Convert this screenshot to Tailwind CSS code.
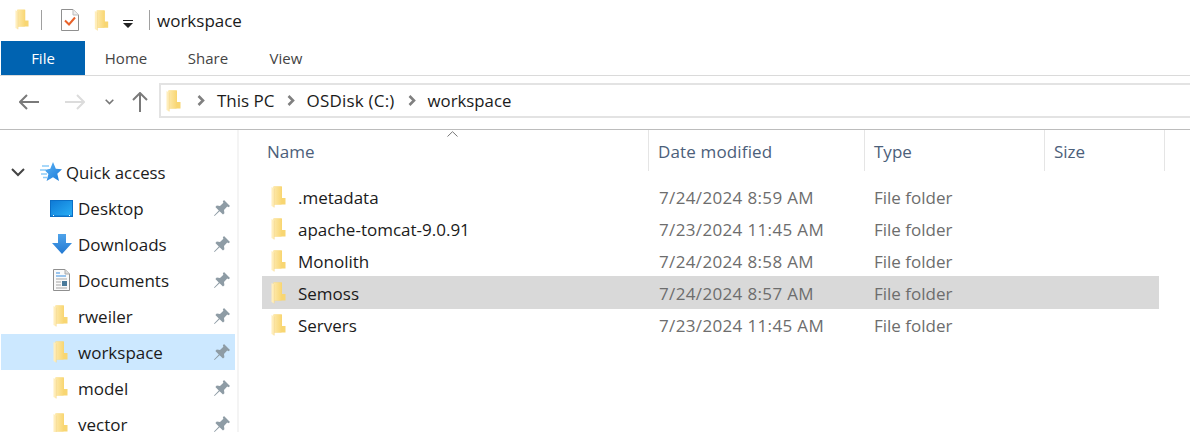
<!DOCTYPE html>
<html lang="en">
<head>
  <meta charset="UTF-8" />
  <title>workspace</title>
  <script src="https://cdn.jsdelivr.net/npm/@tailwindcss/browser@4"></script>
</head>
<body class="w-[1190px] h-[432px] overflow-hidden bg-white font-['Open_Sans',sans-serif] text-[17px] text-[#1b1b1b]">
  <svg class="absolute w-0 h-0">
    <defs>
      <linearGradient id="fold" x1="0" x2="1" y1="0" y2="0">
        <stop offset="0" stop-color="#fde9ab" />
        <stop offset="1" stop-color="#f9d775" />
      </linearGradient>
      <linearGradient id="star" x1="0" x2="1" y1="0" y2="1">
        <stop offset="0" stop-color="#5db4f5" />
        <stop offset="1" stop-color="#1878d8" />
      </linearGradient>
      <linearGradient id="desk" x1="0" x2="1" y1="0" y2="1">
        <stop offset="0" stop-color="#0e7ad6" />
        <stop offset="1" stop-color="#2aaef5" />
      </linearGradient>
      <linearGradient id="down" x1="0" x2="0" y1="0" y2="1">
        <stop offset="0" stop-color="#4fa3ea" />
        <stop offset="1" stop-color="#2379d2" />
      </linearGradient>
    </defs>
    <symbol id="folder" viewBox="0 0 15 22">
      <path d="M2.500 .5H11V12H14.500V18.500H2.500Z" fill="#f8d672" />
      <path d="M2.500 .5H10.500V18.500H2.500Z" fill="url(#fold)" />
      <path d="M.5 1 3.200 2.500V21.500L.5 20Z" fill="#ffeebb" />
      <path d="M3.200 2.500V21.500" stroke="#f3d488" stroke-width=".6" />
    </symbol>
    <symbol id="pin" viewBox="0 0 18 18">
      <path d="M11 1 17 7 15.600 8.200 14.200 7.600 11 11 11.400 14.200 10 15.600 6.600 12.200 1.600 17 1 16.400 5.800 11.400 2.400 8 3.800 6.600 7 7 10.400 3.800 9.800 2.400Z" fill="#8e9ca5" />
    </symbol>
  </svg>

  <!-- title bar -->
  <div class="h-[41px] flex items-center pl-[15px] pb-[1px]">
    <svg class="w-[14px] h-[21px] mb-[2px]"><use href="#folder" /></svg>
    <div class="w-px h-[20px] bg-[#a0a0a0] ml-[12px]"></div>
    <svg class="w-[18px] h-[22px] ml-[19px]" viewBox="0 0 18 22">
      <path d="M.5.5H12L17.500 6V21.500H.5Z" fill="#fff" stroke="#8f8f8f" />
      <path d="M12 .5V6H17.500" fill="#eee" stroke="#bbb" />
      <path d="M4 11.500 8 15.500 14 8.500" fill="none" stroke="#e8622a" stroke-width="2" />
    </svg>
    <svg class="w-[15px] h-[21px] ml-[15px]"><use href="#folder" /></svg>
    <svg class="w-[10px] h-[9px] ml-[14px] mt-[8px]" viewBox="0 0 10 9">
      <path d="M0 0H10V1H0ZM0 3H10L5 8Z" fill="#222" />
    </svg>
    <div class="w-px h-[20px] bg-[#a0a0a0] ml-[16px]"></div>
    <span class="ml-[7px] leading-none">workspace</span>
  </div>

  <!-- ribbon tabs -->
  <div class="h-[35px] flex border-b border-[#dadada] pl-px text-[#444] text-[15px]">
    <div class="w-[84px] h-[34px] bg-[#0063b1] text-white flex items-center justify-center">File</div>
    <div class="w-[82px] flex items-center justify-center">Home</div>
    <div class="w-[82px] flex items-center justify-center">Share</div>
    <div class="w-[34px] flex items-center justify-center ml-[20px]">View</div>
  </div>

  <!-- address row -->
  <div class="h-[54px] flex items-center border-b border-[#bcbcbc] pb-[2px]">
    <svg class="w-[20px] h-[16px] ml-[19px]" viewBox="0 0 20 16"><path d="M1 8H20M8 1 1 8 8 15" fill="none" stroke="#7a7a7a" stroke-width="2" /></svg>
    <svg class="w-[20px] h-[16px] ml-[26px]" viewBox="0 0 20 16"><path d="M0 8H19M12 1 19 8 12 15" fill="none" stroke="#dcdcdc" stroke-width="2" /></svg>
    <svg class="w-[9px] h-[6px] ml-[20px]" viewBox="0 0 9 6"><path d="M.7.7 4.500 4.500 8.300 .7" fill="none" stroke="#777" stroke-width="1.600" /></svg>
    <svg class="w-[16px] h-[20px] ml-[18px]" viewBox="0 0 16 20"><path d="M8 20V1M1 8 8 1 15 8" fill="none" stroke="#7a7a7a" stroke-width="2" /></svg>
    <div class="w-[1031px] h-[35px] mb-[2px] border-2 border-[#e3e3e3] border-r-0 ml-[11px] flex items-center pl-[5px]">
      <svg class="w-[15px] h-[22px]"><use href="#folder" /></svg>
      <svg class="w-[8px] h-[11px] ml-[16px]" viewBox="0 0 8 11"><path d="M1.500 1 6 5.500 1.500 10" fill="none" stroke="#808080" stroke-width="2.600" /></svg>
      <span class="ml-[12px]">This PC</span>
      <svg class="w-[8px] h-[11px] ml-[12px]" viewBox="0 0 8 11"><path d="M1.500 1 6 5.500 1.500 10" fill="none" stroke="#808080" stroke-width="2.600" /></svg>
      <span class="ml-[12px] tracking-[0.2px]">OSDisk (C:)</span>
      <svg class="w-[8px] h-[11px] ml-[13px]" viewBox="0 0 8 11"><path d="M1.500 1 6 5.500 1.500 10" fill="none" stroke="#808080" stroke-width="2.600" /></svg>
      <span class="ml-[12px] text-[16.800px]">workspace</span>
    </div>
  </div>

  <div class="flex">
    <!-- nav pane -->
    <div class="w-[239px] h-[302px] border-r-2 border-[#f4f4f4] pt-[24px] pl-px overflow-hidden">
      <div class="h-[36px] flex items-center">
        <svg class="w-[14px] h-[9px] ml-[10px]" viewBox="0 0 14 9"><path d="M1 1 7 7 13 1" fill="none" stroke="#444" stroke-width="2" /></svg>
        <svg class="w-[22px] h-[20px] ml-[15px]" viewBox="0 0 22 20">
          <path d="M13 0 15.800 6.800 22 7.200 17.300 11.800 19 19 13 15.300 6.600 19 8.400 12 4.500 8 10.300 6.800Z" fill="url(#star)" />
          <path d="M2 4H9M0 8H6M1 12H7M3 15.500H7" stroke="#8ccbf8" stroke-width="1.300" />
        </svg>
        <span class="ml-[4px] mt-[2px] text-[16.800px]">Quick access</span>
      </div>
      <div class="h-[36px] w-[234px] flex items-center pl-[49px] pr-[4px]">
        <svg class="w-[23px] h-[17px]" viewBox="0 0 23 17">
          <rect width="23" height="17" fill="#0b6fc6" />
          <rect x="1" y="1" width="21" height="14.500" fill="url(#desk)" />
          <path d="M3 15.500H4M19 15.500H20" stroke="#fff" />
        </svg>
        <span class="ml-[5px] mt-[2px] flex-1">Desktop</span>
        <svg class="w-[18px] h-[18px]"><use href="#pin" /></svg>
      </div>
      <div class="h-[36px] w-[234px] flex items-center pl-[51px] pr-[4px]">
        <svg class="w-[20px] h-[20px]" viewBox="0 0 20 20"><path d="M6 0H14V9H20L10 20 0 9H6Z" fill="url(#down)" /></svg>
        <span class="ml-[6px] mt-[2px] flex-1">Downloads</span>
        <svg class="w-[18px] h-[18px]"><use href="#pin" /></svg>
      </div>
      <div class="h-[36px] w-[234px] flex items-center pl-[52px] pr-[4px]">
        <svg class="w-[17px] h-[22px]" viewBox="0 0 17 22">
          <path d="M.5.5H12L16.500 5V21.500H.5Z" fill="#fafafa" stroke="#8f8f8f" />
          <path d="M12 .5V5H16.500" fill="#ddd" stroke="#aaa" />
          <path d="M3 4H7M3 7H13" stroke="#3b8fe0" />
          <path d="M3 10H14M3 13H8M3 16H8M3 19H14" stroke="#a5a5a5" />
          <rect x="9" y="12" width="5" height="5" fill="#4a7a9a" />
        </svg>
        <span class="ml-[8px] mt-[2px] flex-1">Documents</span>
        <svg class="w-[18px] h-[18px]"><use href="#pin" /></svg>
      </div>
      <div class="h-[36px] w-[234px] flex items-center pl-[52px] pr-[4px]">
        <svg class="w-[15px] h-[22px]"><use href="#folder" /></svg>
        <span class="ml-[10px] mt-[2px] flex-1">rweiler</span>
        <svg class="w-[18px] h-[18px]"><use href="#pin" /></svg>
      </div>
      <div class="h-[36px] w-[234px] flex items-center pl-[52px] pr-[4px] bg-[#cce8ff]">
        <svg class="w-[15px] h-[22px]"><use href="#folder" /></svg>
        <span class="ml-[10px] mt-[2px] flex-1">workspace</span>
        <svg class="w-[18px] h-[18px]"><use href="#pin" /></svg>
      </div>
      <div class="h-[36px] w-[234px] flex items-center pl-[52px] pr-[4px]">
        <svg class="w-[15px] h-[22px]"><use href="#folder" /></svg>
        <span class="ml-[10px] mt-[2px] flex-1">model</span>
        <svg class="w-[18px] h-[18px]"><use href="#pin" /></svg>
      </div>
      <div class="h-[36px] w-[234px] flex items-center pl-[52px] pr-[4px]">
        <svg class="w-[15px] h-[22px]"><use href="#folder" /></svg>
        <span class="ml-[10px] mt-[2px] flex-1">vector</span>
        <svg class="w-[18px] h-[18px]"><use href="#pin" /></svg>
      </div>
    </div>

    <!-- file list -->
    <div class="flex-1 relative">
      <svg class="absolute left-[208px] top-[1px] w-[11px] h-[6px]" viewBox="0 0 11 6"><path d="M.5 5.500 5.500 .7 10.500 5.500" fill="none" stroke="#777" /></svg>
      <div class="h-[41px] flex text-[#4c607a]">
        <div class="w-[410px] border-r border-[#e5e5e5] pl-[28px] pt-[9px]">Name</div>
        <div class="w-[216px] border-r border-[#e5e5e5] pl-[9px] pt-[9px] tracking-[0.15px]">Date modified</div>
        <div class="w-[180px] border-r border-[#e5e5e5] pl-[9px] pt-[9px]">Type</div>
        <div class="w-[120px] border-r border-[#e5e5e5] pl-[9px] pt-[9px]">Size</div>
      </div>
      <div class="pt-[9px] pl-[23px]">
        <div class="w-[897px] h-[32px] pt-[4px] flex items-center">
          <svg class="w-[15px] h-[22px] ml-[9px] mb-[2px]"><use href="#folder" /></svg>
          <span class="ml-[12px] w-[361px]">.metadata</span>
          <span class="w-[215px] text-[#6d6d6d] tracking-[0.35px]">7/24/2024 8:59 AM</span>
          <span class="text-[#6d6d6d]">File folder</span>
        </div>
        <div class="w-[897px] h-[32px] pt-[4px] flex items-center">
          <svg class="w-[15px] h-[22px] ml-[9px] mb-[2px]"><use href="#folder" /></svg>
          <span class="ml-[12px] w-[361px]">apache-tomcat-9.0.91</span>
          <span class="w-[215px] text-[#6d6d6d] tracking-[0.35px]">7/23/2024 11:45 AM</span>
          <span class="text-[#6d6d6d]">File folder</span>
        </div>
        <div class="w-[897px] h-[32px] pt-[4px] flex items-center">
          <svg class="w-[15px] h-[22px] ml-[9px] mb-[2px]"><use href="#folder" /></svg>
          <span class="ml-[12px] w-[361px]">Monolith</span>
          <span class="w-[215px] text-[#6d6d6d] tracking-[0.35px]">7/24/2024 8:58 AM</span>
          <span class="text-[#6d6d6d]">File folder</span>
        </div>
        <div class="w-[897px] h-[33px] pt-[3px] flex items-center bg-[#d9d9d9]">
          <svg class="w-[15px] h-[22px] ml-[9px] mb-[2px]"><use href="#folder" /></svg>
          <span class="ml-[12px] w-[361px]">Semoss</span>
          <span class="w-[215px] text-[#6d6d6d] tracking-[0.35px]">7/24/2024 8:57 AM</span>
          <span class="text-[#6d6d6d]">File folder</span>
        </div>
        <div class="w-[897px] h-[33px] flex items-center">
          <svg class="w-[15px] h-[22px] ml-[9px] mb-[2px]"><use href="#folder" /></svg>
          <span class="ml-[12px] w-[361px]">Servers</span>
          <span class="w-[215px] text-[#6d6d6d] tracking-[0.35px]">7/23/2024 11:45 AM</span>
          <span class="text-[#6d6d6d]">File folder</span>
        </div>
      </div>
    </div>
  </div>
</body>
</html>
